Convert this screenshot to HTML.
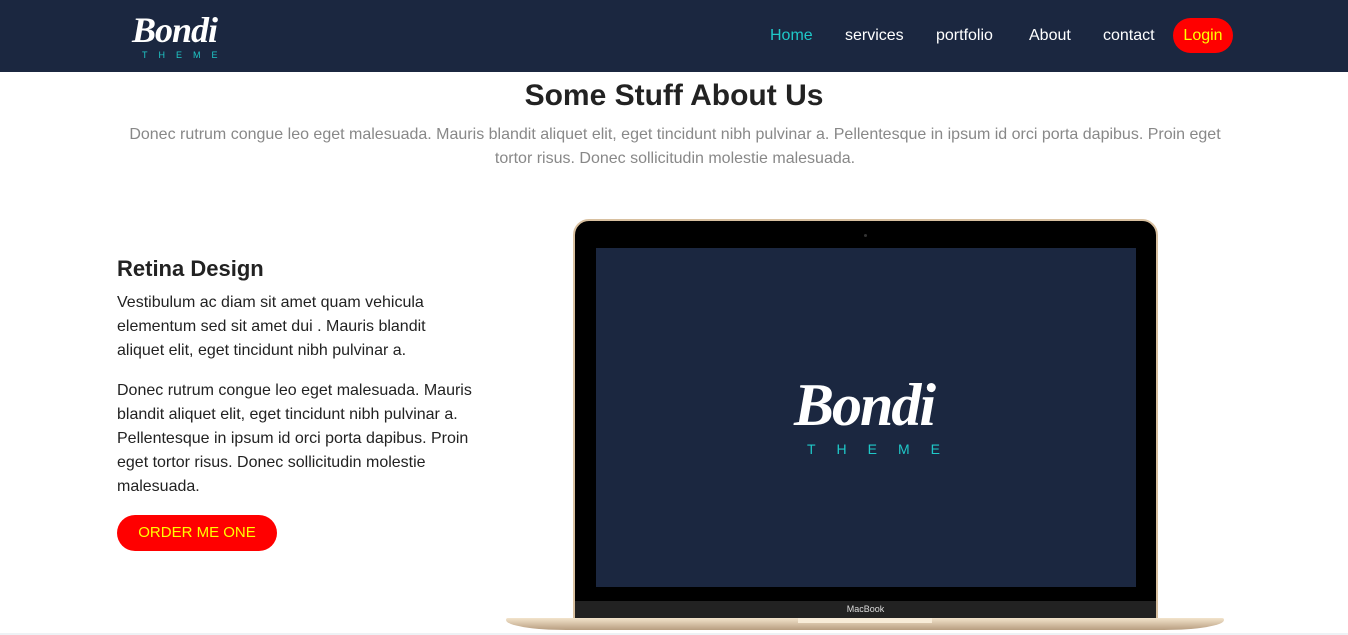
<!DOCTYPE html>
<html><head><meta charset="utf-8"><style>
*{margin:0;padding:0;box-sizing:border-box}
body{width:1348px;height:635px;overflow:hidden;background:#fff;font-family:"Liberation Sans",sans-serif;position:relative}
.nav{position:absolute;left:0;top:0;width:1348px;height:72px;background:#1b2740}
.logo{position:absolute;left:132px;top:10px;color:#fff;font-family:"Liberation Serif",serif;font-style:italic;font-weight:bold;font-size:36px;line-height:40px;letter-spacing:-1px}
.theme{position:absolute;color:#1fc8c8;font-size:9px;letter-spacing:11px;font-family:"Liberation Sans",sans-serif}
.nav a{position:absolute;top:27px;color:#fff;font-size:16px;text-decoration:none}
.login{position:absolute;left:1173px;top:18px;width:60px;height:35px;border-radius:18px;background:#f00;color:#ff0;font-size:16px;text-align:center;line-height:35px}
h1{position:absolute;top:79px;width:1348px;text-align:center;font-size:30px;color:#222;font-weight:bold}
.sub{position:absolute;left:120px;top:123px;width:1110px;text-align:center;color:#888;font-size:16px;line-height:24px}
h2{position:absolute;left:117px;top:256px;font-size:22px;color:#222;font-weight:bold}
.p{position:absolute;left:117px;width:360px;font-size:16px;line-height:24px;color:#222}
.btn{position:absolute;left:117px;top:515px;width:160px;height:36px;border-radius:18px;background:#f00;color:#ff0;font-size:15px;text-align:center;line-height:36px}
</style></head><body>
<div class="nav">
<div class="logo">Bondi</div>
<div class="theme" style="left:142px;top:50px">THEME</div>
<a style="left:770px;color:#1fc8c8">Home</a>
<a style="left:845px">services</a>
<a style="left:936px">portfolio</a>
<a style="left:1029px">About</a>
<a style="left:1103px">contact</a>
<div class="login">Login</div>
</div>
<h1>Some Stuff About Us</h1>
<div class="sub">Donec rutrum congue leo eget malesuada. Mauris blandit aliquet elit, eget tincidunt nibh pulvinar a. Pellentesque in ipsum id orci porta dapibus. Proin eget tortor risus. Donec sollicitudin molestie malesuada.</div>
<h2>Retina Design</h2>
<div class="p" style="top:291px">Vestibulum ac diam sit amet quam vehicula elementum sed sit amet dui . Mauris blandit aliquet elit, eget tincidunt nibh pulvinar a.</div>
<div class="p" style="top:379px">Donec rutrum congue leo eget malesuada. Mauris blandit aliquet elit, eget tincidunt nibh pulvinar a. Pellentesque in ipsum id orci porta dapibus. Proin eget tortor risus. Donec sollicitudin molestie malesuada.</div>
<div class="btn">ORDER ME ONE</div>
<div style="position:absolute;left:573px;top:219px;width:585px;height:404px;border:2px solid #d8c0a0;border-radius:16px 16px 0 0;background:#000"></div>
<div style="position:absolute;left:864px;top:234px;width:3px;height:3px;border-radius:50%;background:#333"></div>
<div style="position:absolute;left:596px;top:248px;width:540px;height:339px;background:#1b2740"></div>
<div style="position:absolute;left:575px;top:601px;width:581px;height:20px;background:#222;color:#ddd;font-size:9px;text-align:center;line-height:17px">MacBook</div>
<div style="position:absolute;left:506px;top:618px;width:718px;height:12px;background:linear-gradient(#f3e4cc,#b89e80);border-radius:2px 2px 60px 60px / 2px 2px 10px 10px"></div>
<div style="position:absolute;left:798px;top:618px;width:134px;height:5px;background:#f8ecd8"></div>
<div style="position:absolute;left:0;top:633px;width:1348px;height:2px;background:#eef2f5"></div>
<div style="position:absolute;left:794px;top:372px;color:#fff;font-family:'Liberation Serif',serif;font-style:italic;font-weight:bold;font-size:60px;line-height:66px;letter-spacing:-2px">Bondi</div>
<div class="theme" style="left:807px;top:441px;font-size:14px;letter-spacing:21px">THEME</div>
</body></html>
